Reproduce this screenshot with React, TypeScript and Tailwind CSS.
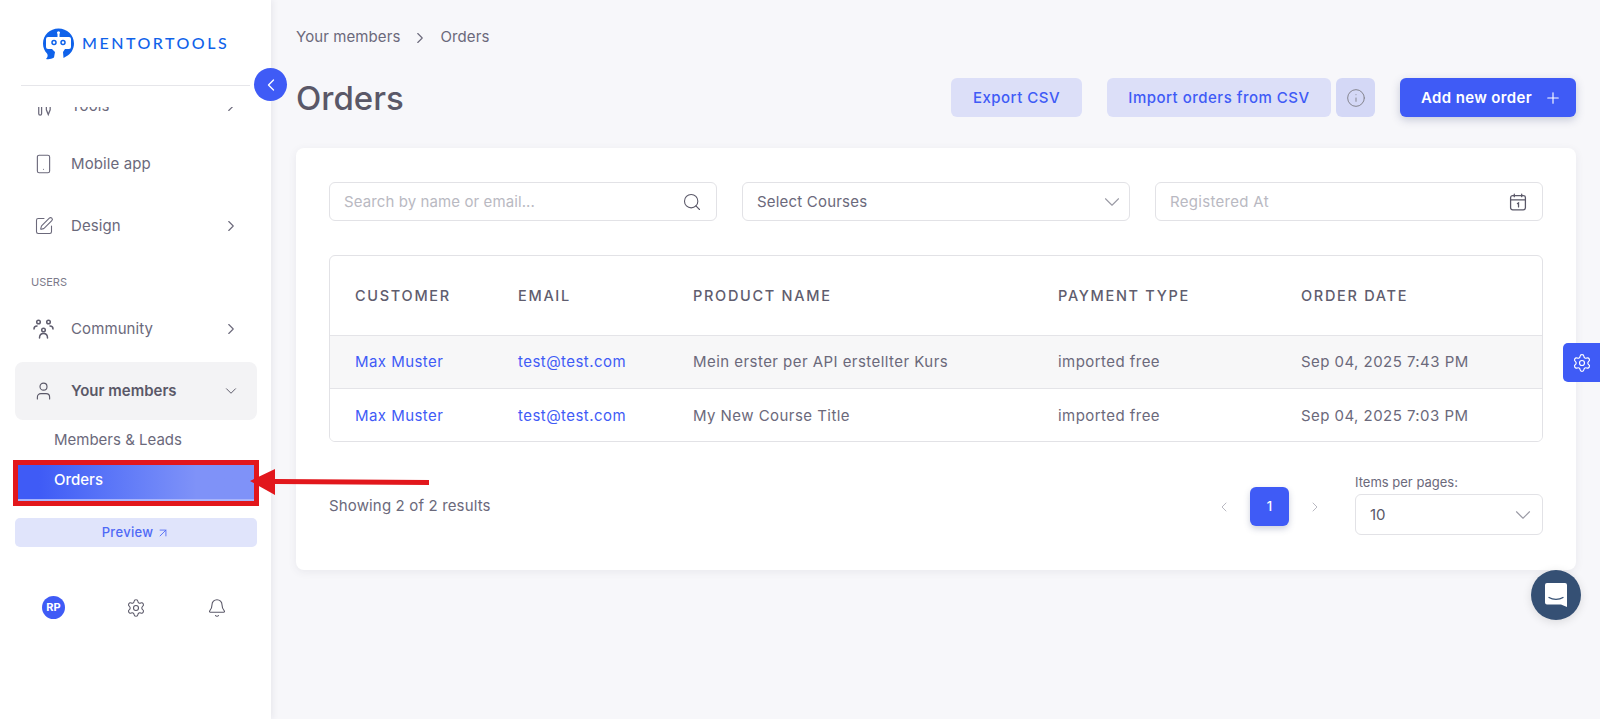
import { ArrowUpRight, Bell, ChevronDown, ChevronLeft, ChevronRight, Info, Plus, Search, Settings, Smartphone, SquarePen, User } from 'lucide-react';

function Logo() {
    return (
        <div className="flex items-center gap-[7px]">
            <svg width="33" height="33" viewBox="0 0 33 33">
                <path d="M4 32C6 30 6 28 5 26.500C2.500 24 1 20.500 1 16.500C1 8 8 1.500 16.500 1.500C25 1.500 32 8 32 16.500C32 22 29 27 24 29.500L21.500 31L21 25L23 22H27Q29 22 29 20V12Q29 10 27 10H17.500V7a1.500 1.500 0 1 0-2 0V10H6Q4 10 4 12V20Q4 22 6 22H10L13 25L12 30.500C9.500 32 7 32.500 4 32Z" fill="#0f62ea" />
                <circle cx="12" cy="15.500" r="2" fill="none" stroke="#0f62ea" strokeWidth="1.500" />
                <circle cx="21" cy="15.500" r="2" fill="none" stroke="#0f62ea" strokeWidth="1.500" />
            </svg>
            <span className="font-['Lato',sans-serif] text-[16px] font-medium tracking-[2.500px] text-[#0f62ea]">MENTORTOOLS</span>
        </div>
    );
}

function CommunityIcon() {
    return (
        <svg width="21" height="21" viewBox="0 0 21 21" fill="none" stroke="#5f5d6e" strokeWidth="1.500" strokeLinecap="round">
            <circle cx="5.500" cy="3" r="1.800" />
            <circle cx="15.500" cy="3" r="1.800" />
            <circle cx="10.500" cy="11" r="1.800" />
            <path d="M1 10c0-1.800 1-3 3-3M20 10c0-1.800-1-3-3-3M6.500 19c0-2.800 1.500-4.500 4-4.500s4 1.700 4 4.500" />
        </svg>
    );
}

function CalendarIcon() {
    return (
        <svg width="18" height="18" viewBox="0 0 17 17" fill="none" stroke="#5a5868" strokeWidth="1.200" strokeLinecap="round">
            <rect x="1.500" y="2.500" width="14" height="13.500" rx="2" />
            <path d="M1.500 6.500h14M5 1v2.500M12 1v2.500M8 10l1-.6v3.800" />
        </svg>
    );
}

function ChatIcon() {
    return (
        <svg width="24" height="26" viewBox="0 0 24 26">
            <path d="M3 1h18a2 2 0 0 1 2 2v22l-6-2.500H3a2 2 0 0 1-2-2V3a2 2 0 0 1 2-2z" fill="#fff" />
            <path d="M5 15.500c4 2.500 10 2.500 14 0" fill="none" stroke="#355074" strokeWidth="1.300" strokeLinecap="round" />
        </svg>
    );
}

function ToolsIcon() {
    return (
        <svg width="22" height="22" viewBox="0 0 22 22" fill="none" stroke="#6b697b" strokeWidth="1.300" strokeLinecap="round">
            <path d="M6 3v16a1.500 1.500 0 0 0 3 0V3M14 3v12l2 5 2-5V3" />
        </svg>
    );
}

function NavRow({ icon, label, chevron = true, className = 'mb-[5px]' }: { icon: React.ReactNode; label: string; chevron?: boolean; className?: string }) {
    return (
        <div className={`flex h-[58px] items-center ml-[15px] mr-[14px] pl-[18px] pr-[17px] text-[15px] text-[#6b697b] ${className}`}>
            <span className="flex w-[21px] justify-center">{icon}</span>
            <span className="ml-[17px] flex-1 pt-[1px] tracking-[0.1px]">{label}</span>
            {chevron && <ChevronRight size={18} strokeWidth={1.500} />}
        </div>
    );
}

const rows = [
    { name: 'Max Muster', email: 'test@test.com', product: 'Mein erster per API erstellter Kurs', type: 'imported free', date: 'Sep 04, 2025 7:43 PM', bg: 'bg-[#f7f7f8]' },
    { name: 'Max Muster', email: 'test@test.com', product: 'My New Course Title', type: 'imported free', date: 'Sep 04, 2025 7:03 PM', bg: 'bg-white' },
];

export default function App() {
    return (
        <div className="relative flex h-[719px] overflow-hidden bg-[#f7f7fa] font-['Inter',sans-serif]">
            <aside className="relative z-10 flex w-[271px] shrink-0 flex-col bg-white shadow-[2px_0_6px_rgba(60,60,90,0.08)]">
                <div className="flex h-[86px] mx-[21px] pl-[21px] pt-[1px] items-center border-b border-[#e6e6ea]">
                    <Logo />
                </div>
                <div className="mt-[21px] h-[612px] overflow-hidden">
                    <div className="mt-[-30px]">
                        <NavRow icon={<ToolsIcon />} label="Tools" className="mb-0" />
                        <NavRow icon={<Smartphone size={22} strokeWidth={1.300} />} label="Mobile app" chevron={false} className="mb-[4px]" />
                        <NavRow icon={<SquarePen size={20} strokeWidth={1.300} />} label="Design" />
                        <div className="h-[40px] pl-[31px] pt-[15px] text-[11px] leading-[14px] text-[#7c7a8a]">USERS</div>
                        <NavRow icon={<CommunityIcon />} label="Community" className="mb-[4px]" />
                        <div className="flex h-[58px] items-center ml-[15px] mr-[14px] rounded-[8px] bg-[#f3f3f5] pl-[18px] pr-[17px] text-[15px] font-semibold text-[#5a5868]">
                            <span className="flex w-[21px] justify-center"><User size={22} strokeWidth={1.300} /></span>
                            <span className="ml-[17px] flex-1 pt-[1px]">Your members</span>
                            <ChevronDown size={18} strokeWidth={1.300} />
                        </div>
                        <div className="mt-[2px] h-[35px] pl-[54px] text-[15px] leading-[35px] text-[#6b697b]">Members &amp; Leads</div>
                        <div className="relative ml-[15px] mr-[14px] mt-[8px] h-[36px] border-b-[2px] border-[#a8b4fa] bg-gradient-to-r from-[#3f5bf6] from-[10%] to-[#7f92f8] to-[75%] pl-[39px] text-[15px] font-medium leading-[30px] text-white">
                            Orders
                            <div className="absolute inset-x-[-2px] top-[-5px] bottom-[-7px] border-[5px] border-[#e2171c]" />
                        </div>
                        <div className="ml-[15px] mr-[14px] mt-[17px] flex h-[29px] items-center justify-center gap-[3px] rounded-[5px] bg-[#e0e4fb] text-[13px] font-medium tracking-[0.3px] text-[#4f69f6]">
                            Preview <ArrowUpRight size={14} strokeWidth={1.500} />
                        </div>
                        <div className="mt-[49px] flex items-center text-[#5a5868]">
                            <div className="ml-[42px] flex h-[23px] w-[23px] items-center justify-center rounded-full bg-[#3f5bf6] text-[11px] font-bold text-white">RP</div>
                            <Settings className="ml-[61px]" size={20} strokeWidth={1.300} />
                            <Bell className="ml-[61px]" size={20} strokeWidth={1.300} />
                        </div>
                    </div>
                </div>
            </aside>

            <main className="flex-1 pl-[25px] pr-[24px]">
                <div className="flex h-[72px] items-center pt-[3px] text-[15px] tracking-[0.1px] text-[#6b697b]">
                    Your members
                    <ChevronRight className="mx-[11px]" size={18} strokeWidth={1.500} />
                    Orders
                </div>
                <div className="flex h-[76px] items-start pt-[6px]">
                    <h1 className="flex-1 pt-[1px] text-[33px] font-medium leading-[39px] text-[#5a5868]">Orders</h1>
                    <button className="flex h-[39px] w-[131px] items-center justify-center rounded-[6px] bg-[#dcdff8] pt-[2px] text-[15px] font-medium tracking-[0.5px] text-[#3f5bf6]">Export CSV</button>
                    <button className="ml-[25px] flex h-[39px] w-[224px] items-center justify-center rounded-[6px] bg-[#dcdff8] pt-[2px] text-[15px] font-medium tracking-[0.5px] text-[#3f5bf6]">Import orders from CSV</button>
                    <button className="ml-[5px] flex h-[39px] w-[39px] items-center justify-center rounded-[6px] bg-[#d4d8f6] text-[#85858f]"><Info size={20} strokeWidth={1.200} /></button>
                    <button className="ml-[25px] flex h-[39px] w-[176px] items-center justify-center gap-[12px] rounded-[6px] bg-[#3f5bf6] pl-[7px] pt-[1px] text-[15px] font-semibold tracking-[0.35px] text-white shadow-[0_3px_8px_rgba(60,70,120,0.25)]">Add new order <Plus size={18} strokeWidth={1.500} /></button>
                </div>

                <section className="h-[422px] rounded-[8px] bg-white px-[33px] pt-[34px] shadow-[0_2px_8px_rgba(60,60,90,0.08)]">
                    <div className="grid grid-cols-3 gap-[25px]">
                        <div className="flex h-[39px] items-center rounded-[6px] border border-[#e2e2e6] pl-[14px] pr-[14px] text-[15px] tracking-[0.1px] text-[#b9b9c2]">
                            <span className="flex-1 pt-[1px]">Search by name or email...</span>
                            <Search className="text-[#5a5868]" size={20} strokeWidth={1.300} />
                        </div>
                        <div className="flex h-[39px] items-center rounded-[6px] border border-[#e2e2e6] pl-[14px] pr-[4px] text-[15px] tracking-[0.2px] text-[#6b697b]">
                            <span className="flex-1 pt-[1px]">Select Courses</span>
                            <ChevronDown className="text-[#9a9aa5]" size={26} strokeWidth={1} />
                        </div>
                        <div className="flex h-[39px] items-center rounded-[6px] border border-[#e2e2e6] pl-[14px] pr-[15px] text-[15px] tracking-[0.3px] text-[#b9b9c2]">
                            <span className="flex-1 pt-[1px]">Registered At</span>
                            <CalendarIcon />
                        </div>
                    </div>

                    <div className="mt-[34px] h-[187px] overflow-hidden rounded-[6px] border border-[#e2e2e6]">
                        <table className="w-full table-fixed text-left text-[15px] tracking-[0.45px] text-[#6b697b]">
                            <thead>
                                <tr className="h-[79px] text-[14.500px] font-medium tracking-[1.700px] text-[#5f5d6e]">
                                    <th className="w-[188px] pl-[25px] pt-[1px] font-medium">CUSTOMER</th>
                                    <th className="w-[175px] pt-[1px] font-medium">EMAIL</th>
                                    <th className="w-[365px] pt-[1px] font-medium">PRODUCT NAME</th>
                                    <th className="w-[243px] pt-[1px] font-medium">PAYMENT TYPE</th>
                                    <th className="pt-[1px] font-medium">ORDER DATE</th>
                                </tr>
                            </thead>
                            <tbody>
                                {rows.map((row) => (
                                    <tr key={row.date} className={`h-[53px] border-t border-[#e4e4e8] ${row.bg}`}>
                                        <td className="pl-[25px] pt-[2px] text-[#3f5bf6]">{row.name}</td>
                                        <td className="pt-[2px] text-[#3f5bf6]">{row.email}</td>
                                        <td className="pt-[2px]">{row.product}</td>
                                        <td className="pt-[2px]">{row.type}</td>
                                        <td className="pt-[2px]">{row.date}</td>
                                    </tr>
                                ))}
                            </tbody>
                        </table>
                    </div>

                    <div className="mt-[42px] flex items-start">
                        <div className="flex-1 pt-[11px] text-[15px] tracking-[0.15px] text-[#6b697b]">Showing 2 of 2 results</div>
                        <div className="flex items-center pt-[3px] text-[#b9b9c2]">
                            <ChevronLeft size={16} strokeWidth={1.500} />
                            <div className="mx-[18px] flex h-[39px] w-[39px] items-center justify-center rounded-[6px] bg-[#3f5bf6] text-[13px] font-medium text-white shadow-[0_3px_6px_rgba(60,70,120,0.25)]">1</div>
                            <ChevronRight size={16} strokeWidth={1.500} />
                        </div>
                        <div className="ml-[32px] mt-[-10px] w-[188px]">
                            <div className="text-[13px] leading-[16px] text-[#6b697b]">Items per pages:</div>
                            <div className="mt-[4px] flex h-[41px] items-center rounded-[6px] border border-[#e2e2e6] pl-[14px] pr-[6px] text-[15px] text-[#5a5868]">
                                <span className="flex-1 pt-[1px]">10</span>
                                <ChevronDown className="text-[#9a9aa5]" size={26} strokeWidth={1} />
                            </div>
                        </div>
                    </div>
                </section>
            </main>

            <div className="absolute left-[1563px] top-[343px] z-20 flex h-[39px] w-[37px] items-center justify-center rounded-l-[5px] bg-[#3f5bf6] text-white">
                <Settings size={20} strokeWidth={1.400} />
            </div>
            <div className="absolute left-[1531px] top-[570px] z-20 flex h-[50px] w-[50px] items-center justify-center rounded-full bg-[#355074] shadow-[0_2px_10px_rgba(0,0,0,0.12)]">
                <ChatIcon />
            </div>
            <div className="absolute left-[254px] top-[68px] z-20 flex h-[33px] w-[33px] items-center justify-center rounded-full bg-[#3f5bf6] text-white">
                <ChevronLeft size={20} strokeWidth={1.600} />
            </div>
            <svg className="absolute left-[248px] top-[466px] z-20" width="184" height="32" viewBox="0 0 184 32">
                <path d="M2 15 27 3v10l154 1v5L27 18v11z" fill="#e2171c" />
            </svg>
        </div>
    );
}
